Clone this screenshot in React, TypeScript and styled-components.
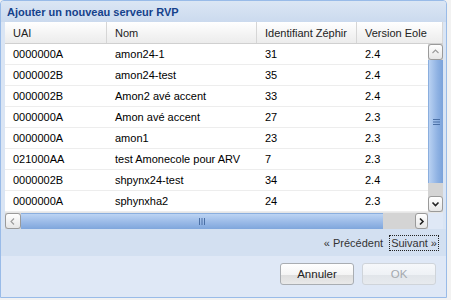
import React from 'react'
import styled, { createGlobalStyle } from 'styled-components'

const GlobalStyle = createGlobalStyle`
  body {
    margin: 0;
    background: #f2f2f2;
    font-family: 'Liberation Sans', Arial, sans-serif;
  }
`

interface Row {
  uai: string
  nom: string
  zephir: string
  version: string
}

const rows: Row[] = [
  { uai: '0000000A', nom: 'amon24-1', zephir: '31', version: '2.4' },
  { uai: '0000002B', nom: 'amon24-test', zephir: '35', version: '2.4' },
  { uai: '0000002B', nom: 'Amon2 avé accent', zephir: '33', version: '2.4' },
  { uai: '0000000A', nom: 'Amon avé accent', zephir: '27', version: '2.3' },
  { uai: '0000000A', nom: 'amon1', zephir: '23', version: '2.3' },
  { uai: '021000AA', nom: 'test Amonecole pour ARV', zephir: '7', version: '2.3' },
  { uai: '0000002B', nom: 'shpynx24-test', zephir: '34', version: '2.4' },
  { uai: '0000000A', nom: 'sphynxha2', zephir: '24', version: '2.3' },
]

const colWidths = [102, 150, 100, 71]

const Window = styled.div`
  width: 445px;
  height: 296px;
  border: 1px solid #99bbe8;
  border-radius: 4px 4px 0 0;
  background: #dfe8f6;
  display: flex;
  flex-direction: column;
  overflow: hidden;
`

const Title = styled.div`
  height: 21px;
  padding-left: 6px;
  display: flex;
  align-items: center;
  background: linear-gradient(#dbe6f4, #cbdaee);
  color: #15428b;
  font-weight: bold;
  font-size: 11px;
`

const Body = styled.div`
  padding: 0 3px 0 4px;
  background: #dae5f4;
`

const Grid = styled.div`
  width: 438px;
  background: #fff;
  display: flex;
  flex-direction: column;
  font-size: 11px;
  color: #000;
`

const HeaderRow = styled.div`
  display: flex;
  height: 22px;
  background: linear-gradient(#ffffff, #f3f3f3 60%, #ececec);
  border-bottom: 1px solid #d0d0d0;
  box-sizing: border-box;
`

const HeaderCell = styled.div<{ $w?: number }>`
  ${({ $w }) => ($w ? `width: ${$w}px;` : 'flex: 1;')}
  box-sizing: border-box;
  padding-left: 8px;
  display: flex;
  align-items: center;
  border-right: 1px solid #d6d6d6;
  color: #222;
`

const BodyArea = styled.div`
  display: flex;
  height: 168px;
`

const Rows = styled.div`
  flex: 1;
  overflow: hidden;
`

const DataRow = styled.div`
  display: flex;
  height: 21px;
  border-bottom: 1px solid #ededed;
  box-sizing: border-box;
`

const Cell = styled.div<{ $w?: number }>`
  ${({ $w }) => ($w ? `width: ${$w}px;` : 'flex: 1;')}
  box-sizing: border-box;
  padding-left: 8px;
  display: flex;
  align-items: center;
  white-space: nowrap;
`

const VScroll = styled.div`
  width: 15px;
  display: flex;
  flex-direction: column;
  background: #d4d4d4;
`

const ArrowBtn = styled.div<{ $w: number; $h: number }>`
  width: ${({ $w }) => $w}px;
  height: ${({ $h }) => $h}px;
  box-sizing: border-box;
  border: 1px solid #9a9a9a;
  border-radius: 3px;
  background: linear-gradient(#ffffff, #e6e6e6);
  display: flex;
  align-items: center;
  justify-content: center;
  flex-shrink: 0;
`

const VThumb = styled.div`
  height: 123px;
  background: linear-gradient(90deg, #b9d1f2, #8fb2e3 60%, #7aa2da);
  border-left: 1px solid #8aaede;
  display: flex;
  align-items: center;
  justify-content: center;
`

const Spacer = styled.div`
  flex: 1;
`

const HScrollRow = styled.div`
  display: flex;
  height: 17px;
  border-top: 1px solid #e6e6e6;
  box-sizing: border-box;
`

const HTrack = styled.div`
  flex: 1;
  display: flex;
  background: #d4d4d4;
`

const HThumb = styled.div`
  width: 362px;
  background: linear-gradient(#bcd4f3, #9dbce8 50%, #7fa6dc);
  border-top: 1px solid #8aaede;
  box-sizing: border-box;
  display: flex;
  align-items: center;
  justify-content: center;
`

const Corner = styled.div`
  width: 15px;
  background: #dfe8f6;
`

const Pager = styled.div`
  height: 27px;
  display: flex;
  align-items: center;
  justify-content: flex-end;
  gap: 6px;
  padding-right: 8px;
  font-size: 11px;
  color: #333;
  background: #d3e0f1;
`

const PagerLink = styled.span<{ $focus?: boolean }>`
  padding: 1px 1px;
  ${({ $focus }) => ($focus ? 'outline: 1px dotted #222;' : '')}
`

const Footer = styled.div`
  flex: 1;
  display: flex;
  justify-content: flex-end;
  align-items: flex-start;
  gap: 8px;
  padding: 7px 10px 0 0;
  background: #dfe8f6;
`

const Button = styled.button<{ $disabled?: boolean }>`
  width: 74px;
  height: 22px;
  box-sizing: border-box;
  border: 1px solid ${({ $disabled }) => ($disabled ? '#cfd4da' : '#a9adb2')};
  border-radius: 3px;
  background: ${({ $disabled }) =>
    $disabled
      ? 'linear-gradient(#f6f8fb, #eef1f5 55%, #e1e5ea 55%, #e7eaee)'
      : 'linear-gradient(#ffffff, #f4f4f4 55%, #dedede 55%, #e9e9e9)'};
  color: ${({ $disabled }) => ($disabled ? '#a5a9ae' : '#222')};
  font-family: 'Liberation Sans', Arial, sans-serif;
  font-size: 11.5px;
  padding: 0;
`

const Chevron = ({ dir }: { dir: 'up' | 'down' | 'left' | 'right' }) => {
  const d = {
    up: 'M1.5 5 L4.5 2 L7.5 5',
    down: 'M1.5 2.5 L4.5 5.5 L7.5 2.5',
    left: 'M5 1.5 L2 4.5 L5 7.5',
    right: 'M3 1.5 L6 4.5 L3 7.5',
  }[dir]
  const dark = dir === 'down' || dir === 'right'
  return (
    <svg width="9" height="9" viewBox="0 0 9 9">
      <path d={d} fill="none" stroke={dark ? '#222' : '#9a9a9a'} strokeWidth={dark ? 1.6 : 1.1} />
    </svg>
  )
}

const VGrip = () => (
  <svg width="7" height="8" viewBox="0 0 7 8">
    <path d="M0 1.5 H7 M0 4 H7 M0 6.5 H7" stroke="#4a6fa5" strokeWidth="1" />
  </svg>
)

const HGrip = () => (
  <svg width="8" height="7" viewBox="0 0 8 7">
    <path d="M1.5 0 V7 M4 0 V7 M6.5 0 V7" stroke="#4a6fa5" strokeWidth="1" />
  </svg>
)

export default function App() {
  return (
    <>
      <GlobalStyle />
      <Window>
        <Title>Ajouter un nouveau serveur RVP</Title>
        <Body>
          <Grid>
            <HeaderRow>
              <HeaderCell $w={colWidths[0]}>UAI</HeaderCell>
              <HeaderCell $w={colWidths[1]}>Nom</HeaderCell>
              <HeaderCell $w={colWidths[2]}>Identifiant Zéphir</HeaderCell>
              <HeaderCell>Version Eole</HeaderCell>
            </HeaderRow>
            <BodyArea>
              <Rows>
                {rows.map((r, i) => (
                  <DataRow key={i}>
                    <Cell $w={colWidths[0]}>{r.uai}</Cell>
                    <Cell $w={colWidths[1]}>{r.nom}</Cell>
                    <Cell $w={colWidths[2]}>{r.zephir}</Cell>
                    <Cell>{r.version}</Cell>
                  </DataRow>
                ))}
              </Rows>
              <VScroll>
                <ArrowBtn $w={15} $h={16}>
                  <Chevron dir="up" />
                </ArrowBtn>
                <VThumb>
                  <VGrip />
                </VThumb>
                <Spacer />
                <ArrowBtn $w={15} $h={16}>
                  <Chevron dir="down" />
                </ArrowBtn>
              </VScroll>
            </BodyArea>
            <HScrollRow>
              <HTrack>
                <ArrowBtn $w={16} $h={16}>
                  <Chevron dir="left" />
                </ArrowBtn>
                <HThumb>
                  <HGrip />
                </HThumb>
                <Spacer />
                <ArrowBtn $w={13} $h={16}>
                  <Chevron dir="right" />
                </ArrowBtn>
              </HTrack>
              <Corner />
            </HScrollRow>
          </Grid>
        </Body>
        <Pager>
          <PagerLink>« Précédent</PagerLink>
          <PagerLink $focus>Suivant »</PagerLink>
        </Pager>
        <Footer>
          <Button>Annuler</Button>
          <Button $disabled>OK</Button>
        </Footer>
      </Window>
    </>
  )
}
